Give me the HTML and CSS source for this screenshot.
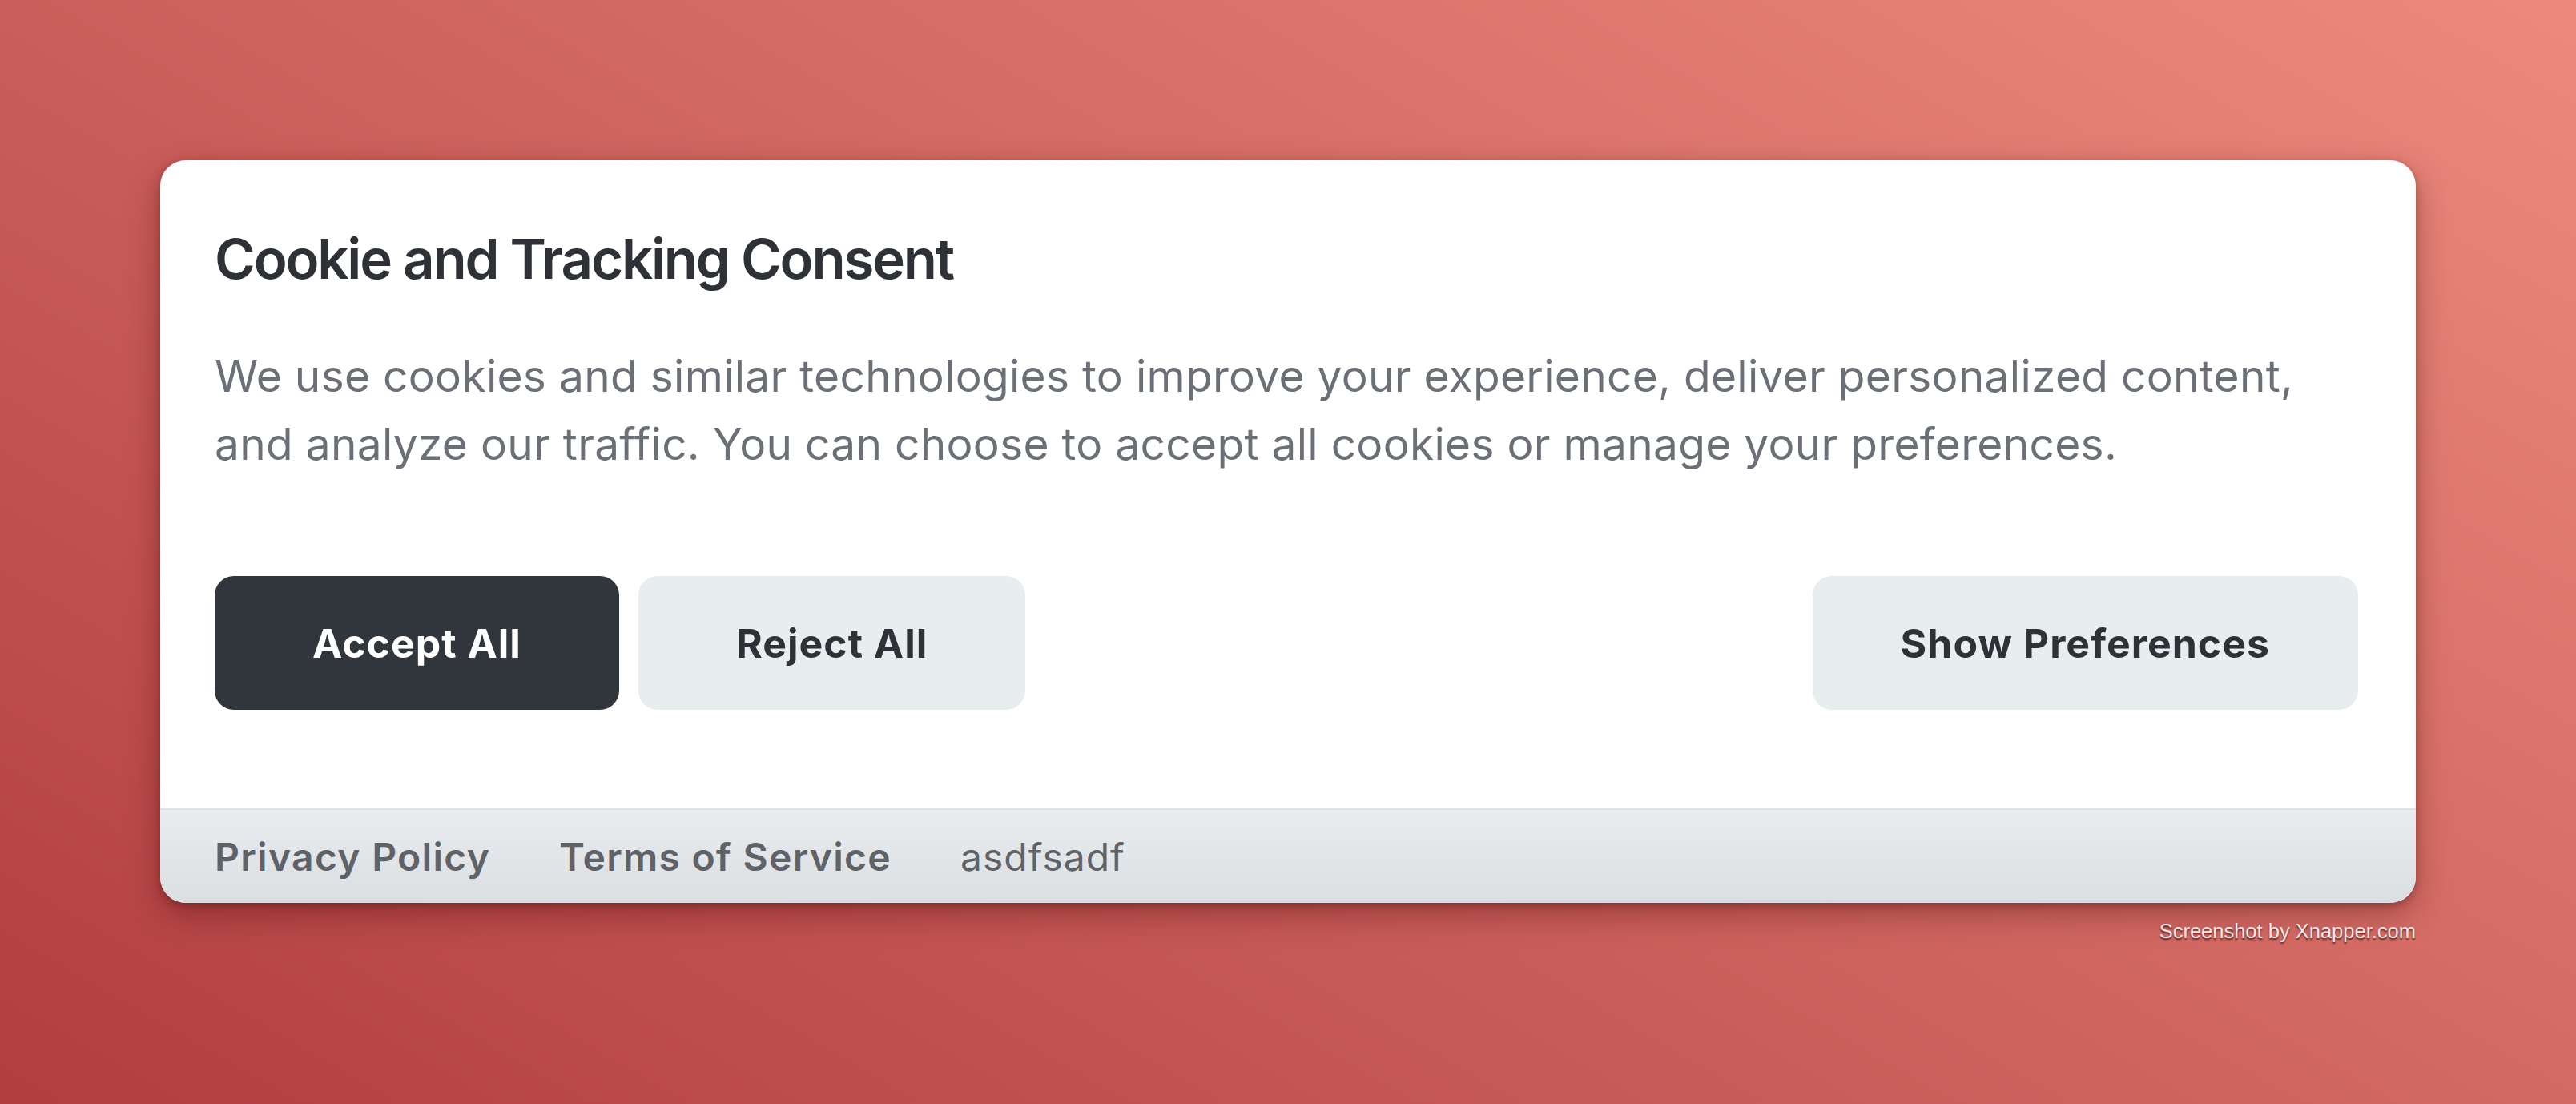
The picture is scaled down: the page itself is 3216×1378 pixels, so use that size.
FILE: index.html
```html
<!DOCTYPE html>
<html lang="en">
<head>
  <meta charset="UTF-8" />
  <meta name="viewport" content="width=device-width, initial-scale=1.0"/>
  <title>Cookie and Tracking Consent</title>
  <link rel="stylesheet" href="styles.css">
</head>
<body>
  <div class="stage">
    <div class="consent">
      <div class="consent-body">
        <h1 class="consent-title">Cookie and Tracking Consent</h1>
        <p class="consent-text">We use cookies and similar technologies to improve your experience, deliver personalized content, and analyze our traffic. You can choose to accept all cookies or manage your preferences.</p>

        <div class="consent-actions">
          <button class="btn btn-dark">Accept All</button>
          <button class="btn btn-light">Reject All</button>
          <button class="btn btn-light btn-right">Show Preferences</button>
        </div>
      </div>

      <div class="consent-footer">
        <a href="#" class="footer-link">Privacy Policy</a>
        <a href="#" class="footer-link">Terms of Service</a>
        <span class="footer-note">asdfsadf</span>
      </div>
    </div>

    <div class="credit">Screenshot by Xnapper.com</div>
  </div>
</body>
</html>
```

FILE: styles.css
```css
body {
  margin: 0;
  padding: 0;
  font-family: Inter, "Noto Sans", sans-serif;
  background: linear-gradient(30deg, #b23e40, #ec8a7e);
  min-height: 100vh;
}

.stage {
  padding: 200px;
}

.consent {
  background: #fff;
  border-radius: 32px;
  overflow: hidden;
  box-shadow: 0 14px 40px rgba(60, 0, 0, 0.35), 0 3px 8px rgba(40, 0, 0, 0.25);
}

.consent-body {
  padding: 81px 72px 123px 68px;
}

.consent-title {
  margin: 0;
  font-size: 69px;
  line-height: 84px;
  font-weight: 600;
  letter-spacing: -2.2px;
  color: #2e3136;
}

.consent-text {
  margin: 62px 0 0;
  font-size: 55px;
  line-height: 85px;
  letter-spacing: 0.3px;
  color: #6b7077;
}

.consent-actions {
  display: flex;
  gap: 24px;
  margin-top: 122px;
}

.btn {
  height: 167px;
  padding: 0 122px;
  border: none;
  border-radius: 24px;
  font-family: inherit;
  font-size: 50px;
  font-weight: 700;
  letter-spacing: 1px;
  cursor: pointer;
}

.btn-dark {
  background: #31363d;
  color: #fff;
}

.btn-light {
  background: #e8edf0;
  color: #2e3136;
}

.btn-right {
  margin-left: auto;
  padding: 0 110px;
}

.consent-footer {
  display: flex;
  align-items: center;
  gap: 86px;
  height: 116px;
  padding-left: 68px;
  border-top: 2px solid #dde1e4;
  background: linear-gradient(to bottom, #e9ecee, #dcdfe2);
  font-size: 48px;
  letter-spacing: 1.3px;
}

.footer-link {
  color: #5f6368;
  font-weight: 600;
  text-decoration: none;
}

.footer-note {
  color: #5f6368;
  letter-spacing: 1px;
}

.credit {
  margin-top: 21px;
  text-align: right;
  font-family: "Liberation Sans", Arial, sans-serif;
  font-size: 25.5px;
  color: #f7e8e6;
  text-shadow: 0 2px 2px rgba(60, 0, 0, 0.7);
}
```
